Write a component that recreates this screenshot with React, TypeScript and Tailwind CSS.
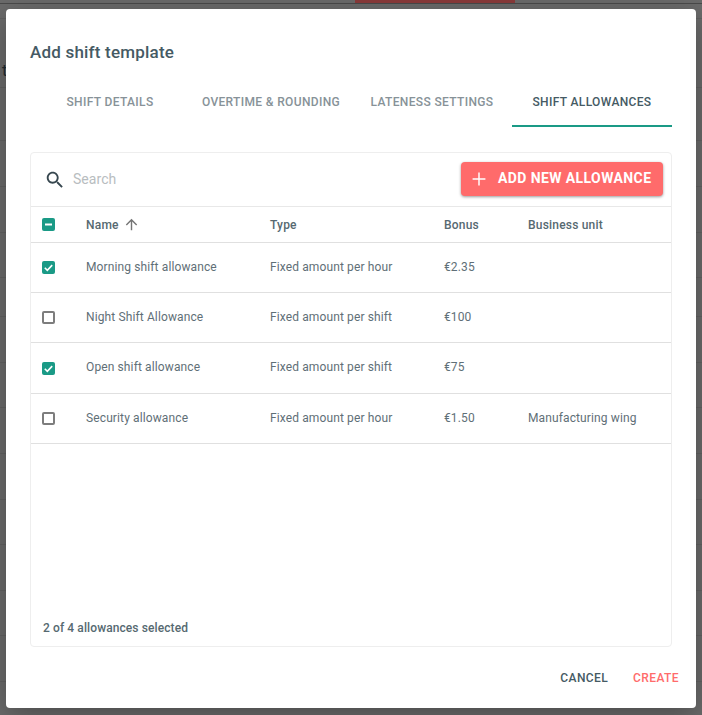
interface Allowance {
  name: string;
  type: string;
  bonus: string;
  unit: string;
  checked: boolean;
  height: string;
}

const allowances: Allowance[] = [
  { name: "Morning shift allowance", type: "Fixed amount per hour", bonus: "€2.35", unit: "", checked: true, height: "h-[50px]" },
  { name: "Night Shift Allowance", type: "Fixed amount per shift", bonus: "€100", unit: "", checked: false, height: "h-[50px]" },
  { name: "Open shift allowance", type: "Fixed amount per shift", bonus: "€75", unit: "", checked: true, height: "h-[51px]" },
  { name: "Security allowance", type: "Fixed amount per hour", bonus: "€1.50", unit: "Manufacturing wing", checked: false, height: "h-[50px]" },
];

const tabs = [
  { label: "SHIFT DETAILS", pad: "pr-[4px]", active: false },
  { label: "OVERTIME & ROUNDING", pad: "pr-[2px]", active: false },
  { label: "LATENESS SETTINGS", pad: "", active: false },
  { label: "SHIFT ALLOWANCES", pad: "", active: true },
];

const backdropLines = [18, 87, 140, 186, 232, 277, 316, 362, 407, 453, 499, 544, 590, 635, 681];

function Checkbox({ state }: { state: "on" | "off" | "some" }) {
  if (state === "off") {
    return <div className="w-[13px] h-[13px] rounded-[2px] border-2 border-[#7d7d7d] bg-white" />;
  }
  return (
    <div className="w-[13px] h-[13px] rounded-[2px] bg-[#1a9a86] flex items-center justify-center text-white">
      <svg viewBox="0 0 13 13" className="w-[13px] h-[13px]" fill="none" stroke="currentColor" strokeWidth="1.6">
        {state === "on" ? <path d="M2.8 6.8l2.5 2.5 4.9-5.2" /> : <path d="M3 6.5h7" strokeWidth="2" />}
      </svg>
    </div>
  );
}

export default function App() {
  return (
    <div className="relative w-[702px] h-[715px] overflow-hidden bg-[#6b6b6b] font-['Roboto',sans-serif] pt-[9px] pl-[6px]">
      {/* Page behind the overlay */}
      <div className="absolute left-0 top-[3px] w-full h-px bg-[#4a4a4a]" />
      <div className="absolute left-[355px] top-0 w-[160px] h-[3px] bg-[#8a3a3a]" />
      {backdropLines.map(y => (
        <div key={y} className="absolute left-0 w-full h-px bg-[#626262]" style={{ top: y }} />
      ))}
      <span className="absolute left-[2px] top-[59px] text-[16px] text-[#1f2a30]">t</span>

      {/* Modal */}
      <div className="relative w-[690px] h-[699px] bg-white rounded-[4px] shadow-[0_8px_30px_rgba(0,0,0,0.3)] flex flex-col">
        <h2 className="mt-[33px] ml-[24px] text-[17px] leading-5 font-medium text-[#455a64] tracking-[0.2px]">Add shift template</h2>

        {/* Tabs */}
        <div className="flex ml-[26px] mt-[16px] h-[49px]">
          {tabs.map(tab => (
            <div
              key={tab.label}
              className={`w-[160px] flex items-center justify-center text-[12px] font-medium tracking-[0.35px] ${tab.pad} ${
                tab.active ? "text-[#455a64] border-b-2 border-[#1a9a86]" : "text-[#879298] pb-[2px]"
              }`}
            >
              {tab.label}
            </div>
          ))}
        </div>

        {/* Table card */}
        <div className="mx-[24px] mt-[25px] h-[495px] rounded-[4px] border border-[#eeeeee] flex flex-col">
          <div className="h-[54px] flex items-center border-b border-[#e8e8e8] pl-[13px] pr-[8px]">
            <svg viewBox="0 0 24 24" className="w-[22px] h-[22px] text-[#37474f]" fill="currentColor">
              <path d="M15.5 14h-.79l-.28-.27C15.41 12.59 16 11.11 16 9.5 16 5.91 13.09 3 9.5 3S3 5.91 3 9.5 5.91 16 9.5 16c1.61 0 3.09-.59 4.23-1.57l.27.28v.79l5 4.99L20.49 19l-4.99-5zm-6 0C7.01 14 5 11.99 5 9.5S7.01 5 9.5 5 14 7.01 14 9.5 11.99 14 9.5 14z" />
            </svg>
            <span className="ml-[7px] text-[14px] text-[#b8bdc0] tracking-[0.05px]">Search</span>
            <button className="ml-auto mb-[2px] h-[34px] w-[202px] rounded-[4px] bg-[#ff6b6b] shadow-[0_1px_3px_rgba(0,0,0,0.4)] flex items-center pl-[7px] text-white text-[14px] font-bold tracking-[0.4px]">
              <svg viewBox="0 0 24 24" className="w-[22px] h-[22px]" fill="currentColor">
                <path d="M19 12.8h-6.2V19h-1.6v-6.2H5v-1.6h6.2V5h1.6v6.2H19v1.6z" />
              </svg>
              <span className="ml-[8px]">ADD NEW ALLOWANCE</span>
            </button>
          </div>

          <div className="h-[36px] flex items-center border-b border-[#e0e0e0] text-[12px] font-medium text-[#566971] tracking-[0.2px]">
            <div className="w-[55px] pl-[11px]"><Checkbox state="some" /></div>
            <div className="w-[184px] flex items-center gap-[4px]">
              Name
              <svg viewBox="0 0 24 24" className="w-[17px] h-[17px] text-[#757575]" fill="currentColor">
                <path d="M4 12l1.41 1.41L11 7.83V20h2V7.83l5.58 5.59L20 12l-8-8-8 8z" />
              </svg>
            </div>
            <div className="w-[174px]">Type</div>
            <div className="w-[84px]">Bonus</div>
            <div>Business unit</div>
          </div>

          {allowances.map(a => (
            <div key={a.name} className={`${a.height} flex items-center border-b border-[#e0e0e0] pb-[2px] text-[12px] text-[#5f6f77] tracking-[0.12px]`}>
              <div className="w-[55px] pl-[11px] pt-[2px]"><Checkbox state={a.checked ? "on" : "off"} /></div>
              <div className="w-[184px]">{a.name}</div>
              <div className="w-[174px]">{a.type}</div>
              <div className="w-[84px]">{a.bonus}</div>
              <div>{a.unit}</div>
            </div>
          ))}

          <div className="flex-1 flex items-end pl-[12px] pb-[9px] text-[12px] font-medium text-[#566971] tracking-[0.1px]">
            2 of 4 allowances selected
          </div>
        </div>

        {/* Footer */}
        <div className="flex justify-end gap-[25px] pr-[17px] mt-[22px] text-[12px] font-medium tracking-[0.4px]">
          <button className="text-[#455a64]">CANCEL</button>
          <button className="text-[#ff6b6b]">CREATE</button>
        </div>
      </div>
    </div>
  );
}
